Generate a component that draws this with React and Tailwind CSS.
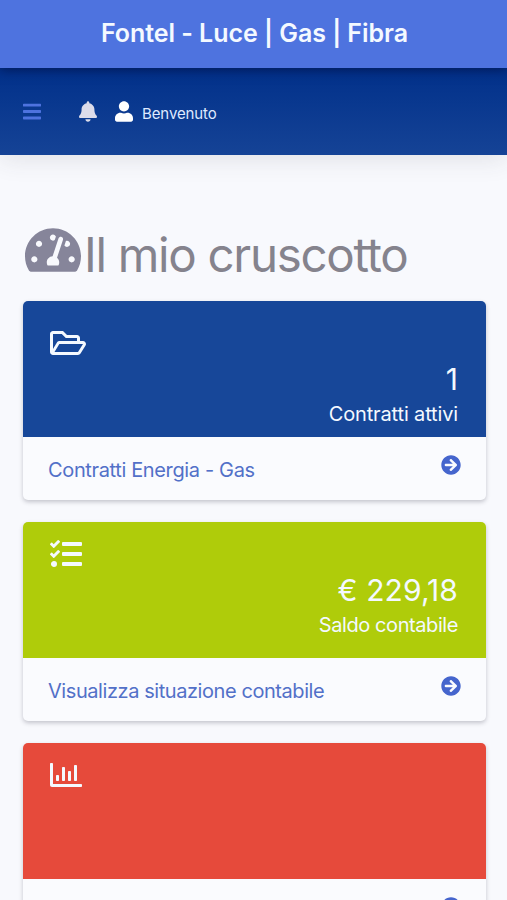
import React from "react";
import {
  FaArrowCircleRight,
  FaBars,
  FaBell,
  FaRegChartBar,
  FaRegFolderOpen,
  FaTachometerAlt,
  FaTasks,
  FaUser,
} from "react-icons/fa";

const cards = [
  {
    id: "contratti",
    icon: <FaRegFolderOpen className="h-[32px] w-[36px]" />,
    color: "bg-[#174799]",
    padding: "pt-[26px]",
    value: "1",
    label: "Contratti attivi",
    labelClass: "tracking-[-0.14px]",
    link: "Contratti Energia - Gas",
    linkClass: "tracking-[-0.36px]",
  },
  {
    id: "saldo",
    icon: <FaTasks className="h-[32px] w-[32px]" />,
    color: "bg-[#afcc0a]",
    padding: "pt-4",
    value: "€ 229,18",
    label: "Saldo contabile",
    labelClass: "tracking-[-0.42px]",
    link: "Visualizza situazione contabile",
    linkClass: "tracking-[-0.43px]",
  },
  {
    id: "consumi",
    icon: <FaRegChartBar className="h-[32px] w-[32px]" />,
    color: "bg-[#e64a3b]",
    padding: "pt-4",
    value: "",
    label: "",
    labelClass: "",
    link: "",
    linkClass: "",
  },
];

const Card = ({ card }) => (
  <div className="h-[199px] shrink-0 overflow-hidden rounded-[5px] bg-[#fafbfe] shadow-[0_2px_4px_rgba(40,40,60,0.25)]">
    <div className={`flex h-[136px] flex-col pr-7 pl-[27px] text-[#f4f9ff] ${card.padding} ${card.color}`}>
      <div className="h-[32px]">{card.icon}</div>
      <div className="mt-[2px] h-9 text-right text-[30px] leading-9 tracking-[0.1px]">{card.value}</div>
      <div className={`mt-[2px] text-right text-[20px] leading-[30px] ${card.labelClass}`}>{card.label}</div>
    </div>
    <div className="flex h-[63px] items-start justify-between pr-[25px] pl-[25px] text-[#5270c8]">
      <span className={`pt-[18px] text-[20px] leading-[30px] ${card.linkClass}`}>{card.link}</span>
      <FaArrowCircleRight className="mt-[18px] h-5 w-5 text-[#4565cd]" />
    </div>
  </div>
);

const App = () => {
  return (
    <div className="flex h-[900px] w-full flex-col overflow-hidden bg-[#f8f9fd] font-['Inter',sans-serif]">
      <header className="z-10 flex h-[68px] shrink-0 items-center justify-center bg-[#4e73df] pl-[2px] shadow-[0_2px_10px_rgba(0,10,50,0.55)]">
        <h1 className="text-[25px] font-semibold tracking-[-0.04px] text-[#f4f9ff]">Fontel - Luce | Gas | Fibra</h1>
      </header>

      <nav className="flex h-[87px] shrink-0 items-center bg-linear-to-b from-[#02308a] to-[#154396] pl-[23px] shadow-[0_4px_24px_rgba(58,59,69,0.12)]">
        <FaBars className="h-[21px] w-[18px] text-[#4e73df]" />
        <FaBell className="ml-[38px] h-[21px] w-[18px] text-[#dcdcea]" />
        <FaUser className="ml-[18px] h-[21px] w-[18px] text-white" />
        <span className="ml-[9px] pt-[5px] text-[15px] tracking-[-0.1px] text-[#dfeaff]">Benvenuto</span>
      </nav>

      <main className="flex flex-col px-[23px] pt-[66px]">
        <h2 className="mb-[23px] flex h-[57px] items-center pl-[2px] text-[#85838d]">
          <FaTachometerAlt className="h-[50px] w-[56px] shrink-0 text-[#86859a]" />
          <span className="ml-[3px] pt-[11px] text-[47.5px] leading-[50px] tracking-[-1.3px] whitespace-nowrap">Il mio cruscotto</span>
        </h2>

        <div className="mr-[-2px] flex flex-col gap-[22px]">
          {cards.map((card) => (
            <Card key={card.id} card={card} />
          ))}
        </div>
      </main>
    </div>
  );
};

export default App;
